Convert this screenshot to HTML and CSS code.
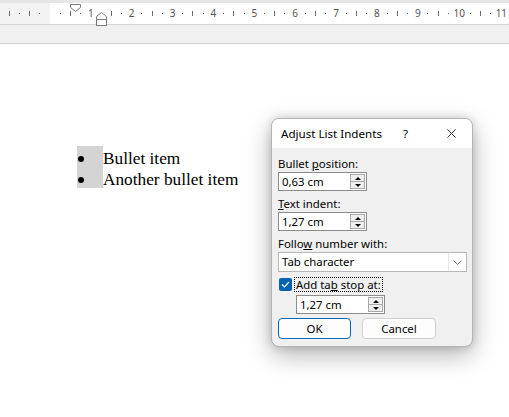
FILE: index.html
```html
<!DOCTYPE html>
<html>
<head>
<meta charset="utf-8">
<link rel="stylesheet" href="styles.css">
</head>
<body>
<header class="ruler">
  <div class="scale">
    <span><b class="tk"></b></span><span><b class="dt"></b></span><span><b class="tk"></b></span><span><b class="dt"></b></span>
    <span></span><span><b class="dt"></b></span><span><b class="tk"></b></span><span><b class="dt"></b></span>
    <span>1</span><span><b class="dt"></b></span><span><b class="tk"></b></span><span><b class="dt"></b></span>
    <span>2</span><span><b class="dt"></b></span><span><b class="tk"></b></span><span><b class="dt"></b></span>
    <span>3</span><span><b class="dt"></b></span><span><b class="tk"></b></span><span><b class="dt"></b></span>
    <span>4</span><span><b class="dt"></b></span><span><b class="tk"></b></span><span><b class="dt"></b></span>
    <span>5</span><span><b class="dt"></b></span><span><b class="tk"></b></span><span><b class="dt"></b></span>
    <span>6</span><span><b class="dt"></b></span><span><b class="tk"></b></span><span><b class="dt"></b></span>
    <span>7</span><span><b class="dt"></b></span><span><b class="tk"></b></span><span><b class="dt"></b></span>
    <span>8</span><span><b class="dt"></b></span><span><b class="tk"></b></span><span><b class="dt"></b></span>
    <span>9</span><span><b class="dt"></b></span><span><b class="tk"></b></span><span><b class="dt"></b></span>
    <span>10</span><span><b class="dt"></b></span><span><b class="tk"></b></span><span><b class="dt"></b></span>
    <span>11</span>
  </div>
  <svg class="marker first" width="12" height="8" viewBox="0 0 12 8"><path d="M0.5 0.5 H10.5 V3.5 L5.5 7.5 L0.5 3.5 Z" fill="#fff" stroke="#7a7a7a"/></svg>
  <svg class="marker hang" width="12" height="14" viewBox="0 0 12 14"><path d="M5.5 0.5 L10.5 4.5 V7.5 H0.5 V4.5 Z" fill="#fff" stroke="#7a7a7a"/><rect x="0.5" y="7.5" width="10" height="6" fill="#fff" stroke="#7a7a7a"/></svg>
</header>
<div class="band"></div>
<main class="doc">
  <ul class="list">
    <li><span class="bul"><i></i></span><span class="txt">Bullet item</span></li>
    <li><span class="bul"><i></i></span><span class="txt">Another bullet item</span></li>
  </ul>
</main>

<div class="dialog">
  <div class="title">
    <span class="ttext">Adjust List Indents</span>
    <span class="help">?</span>
    <svg class="close" width="10" height="10" viewBox="0 0 10 10"><path d="M0.5 0.5 L9.5 9.5 M9.5 0.5 L0.5 9.5" stroke="#1a1a1a" stroke-width="1"/></svg>
  </div>
  <div class="body">
    <div class="lbl">Bullet <u>p</u>osition:</div>
    <div class="spin"><span class="val">0,63 cm</span><span class="btns"><span class="up"></span><span class="dn"></span></span></div>
    <div class="lbl gap"><u>T</u>ext indent:</div>
    <div class="spin"><span class="val">1,27 cm</span><span class="btns"><span class="up"></span><span class="dn"></span></span></div>
    <div class="lbl gap">Follo<u>w</u> number with:</div>
    <div class="select"><span class="val">Tab character</span><span class="drop"><svg width="9" height="5" viewBox="0 0 9 5"><path d="M0.5 0.5 L4.5 4.5 L8.5 0.5" fill="none" stroke="#707070"/></svg></span></div>
    <div class="check-row">
      <span class="box"><svg width="9" height="7" viewBox="0 0 9 7"><path d="M1 3.5 L3.5 6 L8 1" fill="none" stroke="#fff" stroke-width="1.2"/></svg></span>
      <span class="clabel">Add ta<u>b</u> stop at:</span>
    </div>
    <div class="spin indent"><span class="val">1,27 cm</span><span class="btns"><span class="up"></span><span class="dn"></span></span></div>
    <div class="buttons">
      <span class="btn ok">OK</span>
      <span class="btn">Cancel</span>
    </div>
  </div>
</div>
</body>
</html>
```
FILE: styles.css
```css
body {
  margin: 0;
  width: 509px;
  height: 417px;
  overflow: hidden;
  position: relative;
  background: #fff;
  font-family: "Noto Sans", "Liberation Sans", sans-serif;
}

.ruler {
  position: relative;
  height: 21px;
  border-top: 3px solid #e6e6e6;
  border-bottom: 1px solid #d4d4d4;
  background: linear-gradient(to right, #f3f3f3 50px, #fff 50px);
}

.scale {
  display: flex;
  padding-left: 3.9px;
  height: 21px;
  align-items: center;
}

.scale span {
  flex: 0 0 10.225px;
  display: flex;
  justify-content: center;
  align-items: center;
  font-size: 10px;
  color: #555;
  line-height: 21px;
  white-space: nowrap;
}

.tk {
  display: block;
  width: 1px;
  height: 5px;
  background: #6a6a6a;
}

.dt {
  display: block;
  width: 1px;
  height: 1px;
  background: #6a6a6a;
}

.marker {
  position: absolute;
  display: block;
}

.marker.first { left: 70px; top: 1px; }
.marker.hang { left: 96px; top: 9px; }

.band {
  height: 18px;
  background: #f0f0f0;
  border-bottom: 1px solid #d4d4d4;
}

.doc {
  padding-top: 102px;
}

.list {
  list-style: none;
  margin: 0 0 0 77px;
  padding: 0;
  font-family: "Liberation Serif", "Times New Roman", serif;
  font-size: 17.3px;
  color: #000;
}

.list li {
  display: flex;
  height: 21px;
  line-height: 21px;
}

.txt {
  position: relative;
  top: 2px;
}

.bul {
  width: 26px;
  background: #d4d4d4;
  display: flex;
  align-items: center;
}

.bul i {
  display: block;
  width: 6px;
  height: 6px;
  border-radius: 50%;
  background: #000;
  margin: 4px 0 0 1px;
}

.dialog {
  position: absolute;
  left: 271px;
  top: 118px;
  width: 202px;
  height: 229px;
  box-sizing: border-box;
  border: 1px solid #b4b4b4;
  border-radius: 8px;
  background: #f0f0f0;
  overflow: hidden;
  box-shadow: 0 8px 24px rgba(0, 0, 0, 0.3), 0 0 8px rgba(0, 0, 0, 0.14);
  font-size: 11.4px;
  color: #000;
}

.title {
  height: 29px;
  background: #fff;
  display: flex;
  align-items: center;
  padding-left: 9px;
  font-size: 11.6px;
}

.ttext { width: 122px; }

.help {
  width: 8px;
  margin-right: 36px;
}

.close {
  display: block;
  width: 9px;
  height: 9px;
}

.body {
  padding: 8px 6px 0 6px;
}

.lbl {
  line-height: 16px;
  height: 16px;
}

.lbl.gap { margin-top: 5px; }

.spin {
  width: 89px;
  height: 19px;
  box-sizing: border-box;
  border: 1px solid #8c8c8c;
  background: #fff;
  display: flex;
}

.spin .val {
  flex: 1;
  padding-left: 3px;
  line-height: 17px;
}

.btns {
  width: 15px;
  margin: 1px;
  border: 1px solid #a8a8a8;
  background: #efefef;
  display: flex;
  flex-direction: column;
  box-sizing: border-box;
}

.btns span {
  flex: 1;
  display: flex;
  justify-content: center;
  align-items: center;
}

.btns .up { border-bottom: 1px solid #a8a8a8; }

.btns .up::before {
  content: "";
  border-left: 3px solid transparent;
  border-right: 3px solid transparent;
  border-bottom: 3px solid #000;
}

.btns .dn::before {
  content: "";
  border-left: 3px solid transparent;
  border-right: 3px solid transparent;
  border-top: 3px solid #000;
}

.select {
  width: 189px;
  height: 20px;
  box-sizing: border-box;
  border: 1px solid #b8b8b8;
  background: #fff;
  display: flex;
}

.select .val {
  flex: 1;
  padding-left: 3px;
  line-height: 18px;
}

.drop {
  width: 17px;
  border-left: 1px solid #e6e6e6;
  display: flex;
  align-items: center;
  justify-content: center;
}

.drop svg { display: block; }

.check-row {
  margin-top: 5px;
  height: 15px;
  display: flex;
  align-items: center;
}

.box {
  width: 13px;
  height: 13px;
  border-radius: 2px;
  background: #0063b1;
  display: flex;
  align-items: center;
  justify-content: center;
  margin: 0 2px 0 1px;
}

.box svg { display: block; }

.clabel {
  border: 1px dotted #000;
  height: 13px;
  line-height: 13px;
  padding: 0 1px;
}

.spin.indent {
  margin: 3px 0 0 18px;
}

.buttons {
  margin-top: 4px;
  display: flex;
  gap: 11px;
}

.btn {
  width: 74px;
  height: 21px;
  box-sizing: border-box;
  border: 1px solid #cfcfcf;
  border-radius: 4px;
  background: #fdfdfd;
  text-align: center;
  line-height: 19px;
}

.btn.ok {
  width: 73px;
  border-color: #0067c0;
}
```
